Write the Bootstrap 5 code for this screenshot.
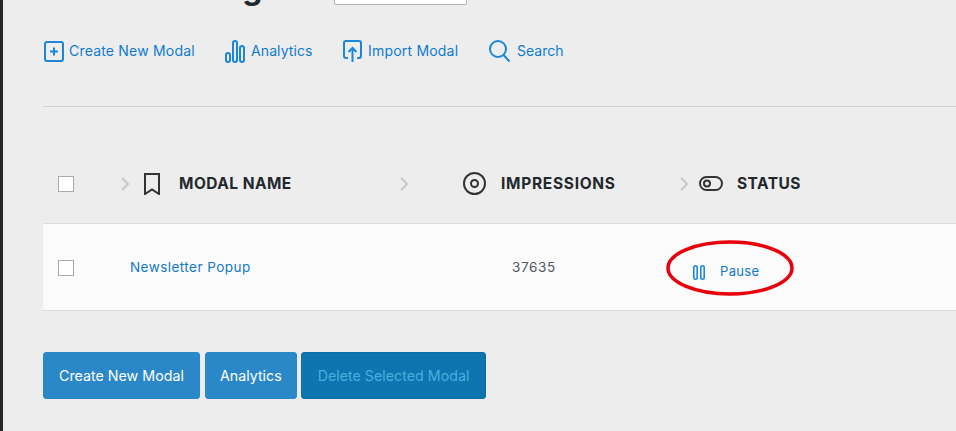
<!DOCTYPE html>
<html lang="en">
<head>
    <meta charset="UTF-8">
    <meta name="viewport" content="width=device-width, initial-scale=1.0">
    <title>Modals</title>
    <link href="https://cdn.jsdelivr.net/npm/bootstrap@5.3.0/dist/css/bootstrap.min.css" rel="stylesheet">
    <style>
        html, body { height: 100%; overflow: hidden; }
        body {
            background-color: #ededed;
            border-left: 3px solid #26262b;
            font-family: "Inter", "Liberation Sans", sans-serif;
            font-size: 14px;
            color: #444;
        }
        a { text-decoration: none; }

        .page-wrap { padding-left: 40px; }

        .title-row { height: 8px; overflow: hidden; }
        .title-row h1 { font-size: 32px; font-weight: 700; color: #23282d; margin: 0 0 1px; padding-left: 8px; line-height: 38px; width: 291px; white-space: nowrap; }
        .title-input { width: 133px; height: 30px; margin-bottom: 3px; border: 1px solid #b4b4b4; border-radius: 2px; background: #fff; }

        .top-links { margin-top: 32px; height: 22px; }
        .top-link { color: #0f7bd0; font-size: 14px; letter-spacing: .2px; line-height: 22px; }
        .top-link svg { stroke: #1b87dc; fill: none; stroke-width: 2; flex: none; }
        .link-create { margin-left: 1px; width: 181px; gap: 5px; }
        .link-analytics { width: 118px; gap: 6px; letter-spacing: .1px; }
        .link-import { width: 146px; gap: 6px; }
        .link-search { gap: 7px; letter-spacing: 0; }

        .page-rule { margin: 44px 0 36px; border: 0; border-top: 1px solid #cfcfcf; opacity: 1; }

        .modal-table { table-layout: fixed; width: calc(100% + 2px); --bs-table-bg: transparent; margin-bottom: 41px; }
        .modal-table th, .modal-table td { padding: 2px 0 0; vertical-align: middle; border-bottom: 1px solid #dcdcdc; }
        .modal-table th { height: 80px; }
        .modal-table td { height: 87px; background-color: #fbfbfb; color: #50575e; font-size: 13.5px; }
        .modal-table .col-check { width: 75px; padding-left: 15px; }
        .col-name, .col-count { width: 280px; }
        .pick { width: 16px; height: 16px; margin: 0; display: block; border: 1px solid #a9a9a9; border-radius: 0 !important; background-color: #fff; }

        .head-cell { display: flex; align-items: center; font-size: 15.5px; font-weight: 700; letter-spacing: .45px; color: #23282d; text-transform: uppercase; }
        .head-cell svg { flex: none; }
        .head-name { padding-left: 3px; }
        .head-name .head-chev { margin-right: 15px; }
        .head-name .head-icon { margin-right: 19px; }
        .head-count { padding-left: 2px; letter-spacing: .7px; }
        .head-count .head-chev { margin-right: 55px; }
        .head-count .head-icon { margin-right: 15px; }
        .head-status { padding-left: 2px; }
        .head-status .head-chev { margin-right: 11px; }
        .head-status .head-icon { margin-right: 14px; }

        .row-link { color: #1377c8; padding-left: 12px; letter-spacing: .45px; }
        .modal-table .row-count { padding-left: 114px; letter-spacing: .6px; }
        .modal-table .pause-cell { padding-left: 15px; }
        .pause-link { position: relative; display: inline-flex; align-items: center; gap: 15px; margin-top: 12px; color: #1377c8; font-size: 13px; letter-spacing: .35px; }
        .pause-mark { position: absolute; left: -27px; top: -22px; pointer-events: none; }

        .action-btn { height: 47px; border-radius: 3px; font-size: 14.25px; padding: 2px 15px 0; background-color: #2a88c8; border: 1px solid #2a88c8; color: #fff; }
        .action-btn.is-off { background-color: #0f75b1; border-color: #0e6ea6; color: #45b0de; opacity: 1; padding: 2px 16px 0; }
        .action-btn.is-short { padding: 2px 14px 0; }
        .action-row { gap: 4px; }
        .action-row .action-btn:first-child { margin-right: 1px; }
    </style>
</head>
<body>
    <div class="page-wrap">
        <div class="title-row d-flex align-items-end">
            <h1>Modal Manager</h1>
            <input class="title-input" type="text" aria-label="Filter">
        </div>

        <div class="top-links d-flex">
            <a href="#" class="top-link link-create d-flex align-items-center">
                <svg width="20" height="21" viewBox="0 0 20 21"><rect x="1" y="1" width="18" height="19" rx="2"/><path d="M10 6.5v8M6 10.5h8"/></svg>
                Create New Modal
            </a>
            <a href="#" class="top-link link-analytics d-flex align-items-center">
                <svg width="20" height="23" viewBox="0 0 20 23"><rect x="1" y="13" width="4" height="9" rx="2"/><rect x="8" y="1" width="4" height="21" rx="2"/><rect x="15" y="6" width="4" height="16" rx="2"/></svg>
                Analytics
            </a>
            <a href="#" class="top-link link-import d-flex align-items-center">
                <svg width="19" height="22" viewBox="0 0 19 22"><path d="M5 18H3a2 2 0 0 1-2-2V3a2 2 0 0 1 2-2h13a2 2 0 0 1 2 2v13a2 2 0 0 1-2 2h-2"/><path d="M9.5 22V8M5.5 12l4-4 4 4"/></svg>
                Import Modal
            </a>
            <a href="#" class="top-link link-search d-flex align-items-center">
                <svg width="21" height="22" viewBox="0 0 21 22"><circle cx="9" cy="9" r="8"/><path d="M14.5 15l6 6.5"/></svg>
                Search
            </a>
        </div>

        <hr class="page-rule">

        <table class="table modal-table">
            <thead>
                <tr>
                    <th class="col-check"><input class="form-check-input pick" type="checkbox" aria-label="Select all"></th>
                    <th class="col-name">
                        <div class="head-cell head-name">
                            <svg class="head-chev" width="8" height="14" viewBox="0 0 8 14" fill="none" stroke="#c8c8c8" stroke-width="2"><path d="M1 1l6 6-6 6"/></svg>
                            <svg class="head-icon" width="16" height="22" viewBox="0 0 16 22" fill="none" stroke="#333" stroke-width="2"><path d="M1 1h14v20l-7-4.5L1 21z"/></svg>
                            Modal Name
                        </div>
                    </th>
                    <th class="col-count">
                        <div class="head-cell head-count">
                            <svg class="head-chev" width="8" height="14" viewBox="0 0 8 14" fill="none" stroke="#c8c8c8" stroke-width="2"><path d="M1 1l6 6-6 6"/></svg>
                            <svg class="head-icon" width="23" height="23" viewBox="0 0 23 23" fill="none" stroke="#333" stroke-width="2"><circle cx="11.5" cy="11.5" r="10.5"/><circle cx="11.5" cy="11.5" r="3.5"/></svg>
                            Impressions
                        </div>
                    </th>
                    <th>
                        <div class="head-cell head-status">
                            <svg class="head-chev" width="8" height="14" viewBox="0 0 8 14" fill="none" stroke="#c8c8c8" stroke-width="2"><path d="M1 1l6 6-6 6"/></svg>
                            <svg class="head-icon" width="24" height="15" viewBox="0 0 24 15" fill="none" stroke="#333" stroke-width="2"><rect x="1" y="1" width="22" height="13" rx="6.5"/><circle cx="8" cy="7.5" r="3"/></svg>
                            Status
                        </div>
                    </th>
                </tr>
            </thead>
            <tbody>
                <tr>
                    <td class="col-check"><input class="form-check-input pick" type="checkbox" aria-label="Select Newsletter Popup"></td>
                    <td><a href="#" class="row-link">Newsletter Popup</a></td>
                    <td class="row-count">37635</td>
                    <td class="pause-cell">
                        <a href="#" class="pause-link">
                            <svg width="12" height="15" viewBox="0 0 12 15" fill="none" stroke="#1b87dc" stroke-width="1.6"><rect x=".8" y=".8" width="3.4" height="13.4" rx="1.7"/><rect x="7.8" y=".8" width="3.4" height="13.4" rx="1.7"/></svg>
                            Pause
                            <svg class="pause-mark" width="128" height="56" viewBox="0 0 128 56" fill="none" stroke="#e8000b" stroke-width="3.5"><ellipse cx="64" cy="28" rx="62" ry="26"/></svg>
                        </a>
                    </td>
                </tr>
            </tbody>
        </table>

        <div class="d-flex action-row">
            <button type="button" class="btn action-btn">Create New Modal</button>
            <button type="button" class="btn action-btn is-short">Analytics</button>
            <button type="button" class="btn action-btn is-off" disabled>Delete Selected Modal</button>
        </div>
    </div>
    <script src="https://cdn.jsdelivr.net/npm/bootstrap@5.3.0/dist/js/bootstrap.bundle.min.js"></script>
</body>
</html>
